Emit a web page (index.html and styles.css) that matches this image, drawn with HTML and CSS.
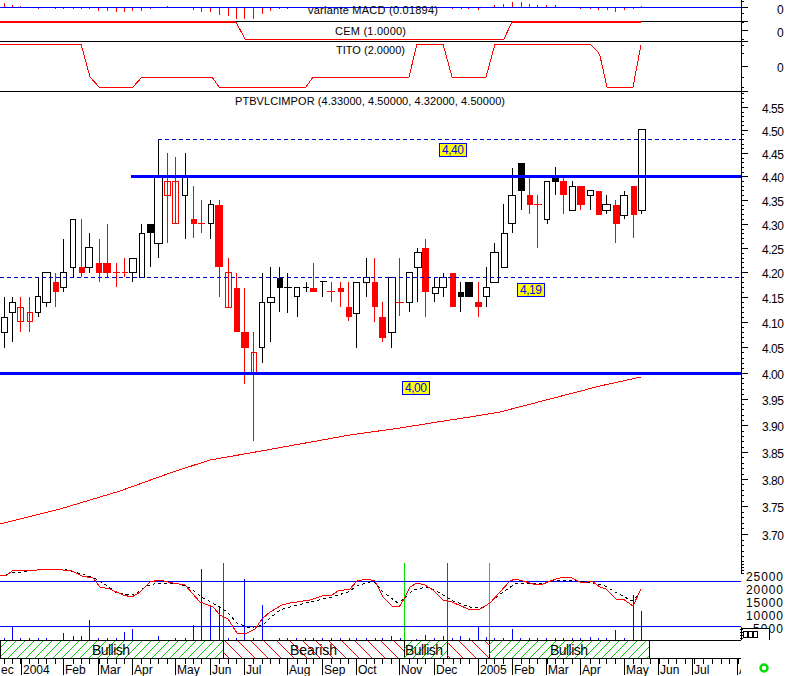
FILE: index.html
```html
<!DOCTYPE html>
<html lang="en">
<head>
    <meta charset="UTF-8">
    <title>PTBVLCIMPOR</title>
    <link rel="stylesheet" href="styles.css">
</head>
<body>

<svg id="chart" class="chart" width="788" height="676" viewBox="0 0 788 676">
    <defs>
        <pattern id="hatchGreen" width="9" height="9" patternUnits="userSpaceOnUse">
            <path class="hatch-green" d="M-1 10L10 -1M-1 1L1 -1M8 10L10 8"/>
        </pattern>
        <pattern id="hatchRed" width="13" height="13" patternUnits="userSpaceOnUse">
            <path class="hatch-red" d="M-1 -1L14 14M-1 12L1 14M12 -1L14 1"/>
        </pattern>
        <clipPath id="timeClip"><rect x="0" y="658" width="741" height="18"/></clipPath>
    </defs>
    <g id="panels"></g>
    <g id="volume"></g>
    <g id="candles"></g>
    <g id="lines"></g>
    <g id="band"></g>
    <g id="axis"></g>
    <g id="labels"></g>
</svg>

<script src="script.js"></script>

</body>
</html>
```

FILE: styles.css
```css
body {
    margin: 0;
    padding: 0;
    background-color: white;
}
.chart {
    display: block;
    font-family: "Liberation Sans", Arial, sans-serif;
    font-size: 11px;
    fill: black;
}
.chart line, .chart rect, .chart polyline {
    shape-rendering: crispEdges;
}
.black { stroke: black; stroke-width: 1; fill: none; }
.blue { stroke: #0000ff; stroke-width: 1; fill: none; }
.red { stroke: #ff0000; stroke-width: 1; fill: none; }
.green { stroke: #00e000; stroke-width: 1; fill: none; }
.thick { stroke-width: 3; }
.thick-red { stroke-width: 2; }
.dashed { stroke: #0000cc; stroke-width: 1; stroke-dasharray: 4 3; }
.dotted { stroke: black; stroke-width: 1; stroke-dasharray: 3 3; fill: none; }
.fill-red { fill: #ff0000; stroke: none; }
.fill-black { fill: black; stroke: none; }
.outline-black { fill: white; stroke: black; stroke-width: 1; }
.outline-red { fill: none; stroke: #ff0000; stroke-width: 1; }
.hatch-green { stroke: #00d000; stroke-width: 1; fill: none; shape-rendering: crispEdges; }
.hatch-red { stroke: #ff0000; stroke-width: 1; fill: none; shape-rendering: crispEdges; }
.tag { fill: #ffff00; stroke: #0000ff; stroke-width: 1; }
.tag-text { fill: #0000ff; font-size: 12px; }
.band-text { font-size: 14px; }
.scale-text { font-size: 12px; }
.ring { fill: none; stroke: #00e000; stroke-width: 2.5; }
.white-box { fill: white; stroke: none; }
```

FILE: script.js
```js
const NS = "http://www.w3.org/2000/svg";
const AXIS_X = 741;

function add(group, tag, attrs, text) {
    const el = document.createElementNS(NS, tag);
    for (const key in attrs) {
        el.setAttribute(key, attrs[key]);
    }
    if (text !== undefined) {
        el.textContent = text;
    }
    document.getElementById(group).appendChild(el);
    return el;
}

function hline(group, cls, x1, x2, y) {
    add(group, "line", { class: cls, x1: x1, x2: x2, y1: y + 0.5, y2: y + 0.5 });
}

function vline(group, cls, x, y1, y2) {
    add(group, "line", { class: cls, x1: x + 0.5, x2: x + 0.5, y1: y1, y2: y2 });
}

function poly(group, cls, points) {
    add(group, "polyline", { class: cls, points: points.map(p => p.join(",")).join(" ") });
}

// type, wick x, body left, body right, high, low, body top, body bottom
const candles = [
    ["w",4,1,7,297,348,317,332], ["w",12,9,15,297,342,302,312], ["o",20,17,23,297,332,307,321],
    ["o",29,27,32,297,332,312,321], ["w",38,35,40,277,317,296,312], ["w",46,42,50,272,307,272,302],
    ["r",55,53,59,273,307,282,292], ["w",63,60,66,239,292,272,287], ["w",73,70,75,219,277,219,267],
    ["r",81,79,85,219,277,267,273], ["w",89,85,92,233,273,247,267], ["r",99,96,102,239,282,263,273],
    ["r",107,103,111,224,277,263,273], ["d",116,113,120,263,287,272,272], ["d",124,122,128,258,277,272,272],
    ["w",132,129,136,258,282,258,272], ["w",141,139,144,224,277,233,277], ["k",150,147,154,224,267,224,233],
    ["w",158,154,162,139,258,177,243], ["o",167,164,170,153,243,181,195], ["o",175,172,178,157,223,181,223],
    ["w",185,182,187,153,239,177,195], ["r",193,191,197,186,238,219,224], ["d",201,198,205,200,233,223,223],
    ["w",210,208,213,200,239,204,223], ["r",219,215,223,200,297,205,267], ["o",228,225,231,258,307,272,307],
    ["r",236,234,240,273,332,288,332], ["r",244,241,249,288,384,332,348], ["o",253,251,256,332,441,352,373],
    ["w",262,259,264,273,363,302,347], ["w",270,267,274,267,342,297,302], ["k",279,277,283,267,312,278,288],
    ["b",287,284,292,273,313,287,287], ["w",297,294,299,287,317,287,296], ["b",306,303,309,282,292,287,287],
    ["r",313,310,317,263,292,288,292], ["b",322,320,327,281,297,281,281], ["d",331,327,335,282,302,291,291],
    ["r",340,338,344,282,307,288,292], ["r",348,346,352,282,321,307,317], ["w",356,353,359,282,348,282,313],
    ["w",366,363,369,258,297,277,282], ["r",374,372,378,258,322,282,307], ["r",382,379,386,302,342,317,338],
    ["w",391,388,395,277,348,277,332], ["d",399,396,404,258,316,302,302], ["w",409,406,412,272,312,272,302],
    ["w",417,414,421,248,302,252,267], ["r",425,422,429,239,317,248,292], ["w",434,432,438,278,302,287,293],
    ["w",443,439,446,273,297,277,287], ["r",453,450,456,273,307,273,307], ["k",460,458,464,282,312,292,297],
    ["k",469,465,473,282,297,282,297], ["r",478,475,482,282,317,302,307], ["w",486,483,489,267,307,287,296],
    ["w",494,490,498,243,282,252,282], ["w",503,501,507,204,267,233,267], ["w",512,508,515,168,233,195,223],
    ["k",521,518,525,163,210,163,191], ["r",529,527,533,177,214,195,205], ["d",537,534,542,195,248,204,204],
    ["w",547,544,549,181,224,181,219], ["k",555,552,559,167,195,178,182], ["r",563,560,567,176,214,181,195],
    ["w",572,569,575,181,210,186,210], ["r",580,577,585,186,210,186,205], ["w",590,587,593,190,210,190,195],
    ["r",599,596,602,191,215,191,215], ["w",606,602,610,195,214,204,210], ["r",615,613,620,200,243,205,224],
    ["w",624,620,627,191,219,195,215], ["r",633,631,637,186,238,186,215], ["w",641,638,645,129,214,129,210]
];

candles.forEach(c => {
    const [type, x, l, r, hi, lo, top, bot] = c;
    const dark = type === "w" || type === "k" || type === "b";
    const cls = dark ? "black" : "red";
    vline("candles", cls, x, hi, lo);
    if (type === "d" || type === "b") {
        hline("candles", cls, l, r, top);
    } else if (type === "r") {
        add("candles", "rect", { class: "fill-red", x: l, y: top, width: r - l, height: bot - top });
    } else if (type === "k") {
        add("candles", "rect", { class: "fill-black", x: l, y: top, width: r - l, height: bot - top });
    } else {
        add("candles", "rect", {
            class: type === "w" ? "outline-black" : "outline-red",
            x: l + 0.5, y: top + 0.5, width: r - l, height: bot - top
        });
    }
});

// moving average
poly("lines", "red", [[0,524],[60,509],[120,491],[170,473],[210,460],[250,453],[300,444],[350,435],
    [400,428],[450,420],[470,417],[500,412],[550,399],[600,386],[641,377]]);

// support and resistance
hline("lines", "blue thick", 131, AXIS_X, 176);
hline("lines", "blue thick", 0, AXIS_X, 373);
hline("lines", "dashed", 158, AXIS_X, 139);
hline("lines", "dashed", 0, AXIS_X, 277);

// top panels
hline("panels", "black", 0, AXIS_X, 21);
hline("panels", "black", 0, AXIS_X, 41);
hline("panels", "black", 0, AXIS_X, 91);

const macd = [[4,3],[12,5],[20,6],[38,9],[55,9],[63,9],[73,9],[81,9],[89,9],[98,11],[107,11],[116,12],
    [124,12],[132,11],[141,11],[150,9],[167,6],[193,10],[201,12],[210,12],[219,15],[228,16],[236,19],
    [244,19],[253,19],[262,14],[270,11],[279,9],[287,9],[452,9],[461,9],[468,9],[478,10],[494,5],
    [503,4],[512,2],[521,2],[529,4],[537,5],[546,5],[555,5],[563,8],[580,9],[590,9],[598,10],[607,10],
    [615,12],[624,10],[633,9],[641,6]];
macd.forEach(b => vline("panels", "red", b[0], Math.min(7, b[1]), Math.max(7, b[1])));
hline("panels", "blue", 0, AXIS_X, 7);

poly("panels", "red", [[0,22],[236,22],[245,39],[504,39],[512,22],[641,22]]);
hline("panels", "red thick-red", 0, 236, 21);
hline("panels", "red thick-red", 512, 641, 21);
poly("panels", "red", [[0,44],[81,44],[90,77],[99,87],[133,87],[142,77],[212,77],[219,87],[306,87],
    [313,77],[409,77],[417,44],[443,44],[452,77],[486,77],[495,44],[590,44],[598,52],[600,56],[607,87],[633,87],[641,45]]);

// volume bars
const small = [4,20,29,38,46,98,107,116,175,185,228,236,253,279,287,296,305,313,322,331,340,349,356,366,
    375,382,400,434,452,469,494,503,520,529,537,546,555,563,572,580,598,606,624];
small.forEach(x => vline("volume", "blue", x, 638, 640));
[[12,627],[63,633],[73,636],[81,636],[89,620],[124,632],[132,629],[158,636],[193,625],[201,569],[210,607],
 [219,606],[244,579],[262,605],[391,636],[416,639],[425,635],[443,636],[460,636],[478,626],[486,637],
 [512,629],[590,637],[615,630],[633,595],[641,611]].forEach(b => vline("volume", "blue", b[0], b[1], 640));
vline("volume", "red", 223, 563, 640);
vline("volume", "green", 404, 563, 640);
vline("volume", "red", 447, 563, 640);
vline("volume", "green", 489, 563, 640);
hline("volume", "blue", 0, AXIS_X, 581);
hline("volume", "blue", 0, AXIS_X, 626);

add("volume", "polyline", { class: "dotted", points: [[0,576],[12,573],[23,572],[37,570],[63,569],[78,573],
    [92,577],[103,583],[117,593],[133,595],[147,586],[157,583],[180,584],[190,588],[203,598],[220,607],
    [227,612],[237,623],[250,628],[263,625],[270,618],[280,610],[290,607],[310,602],[332,597],[348,592],
    [357,586],[373,581],[383,592],[398,603],[404,599],[413,590],[427,587],[440,593],[453,601],[470,607],
    [483,608],[493,600],[503,592],[515,584],[530,583],[543,583],[557,580],[573,580],[593,583],[605,586],
    [617,593],[632,601],[638,595]].join(" ") });
poly("volume", "red", [[0,576],[7,575],[12,571],[23,570],[37,570],[50,569],[63,570],[72,571],[82,576],
    [93,578],[100,587],[110,589],[123,595],[132,597],[140,592],[150,582],[159,580],[173,583],[185,585],
    [200,602],[213,607],[220,615],[228,619],[237,633],[247,633],[255,629],[262,619],[270,612],[282,605],
    [290,603],[310,600],[322,596],[332,595],[338,591],[350,589],[357,581],[367,579],[375,581],[383,597],
    [392,606],[399,607],[404,599],[410,587],[417,583],[425,585],[433,590],[443,600],[452,602],[468,609],
    [480,609],[490,603],[500,592],[510,581],[515,579],[523,581],[530,583],[537,585],[543,584],[553,580],
    [563,577],[572,578],[582,583],[592,581],[600,587],[606,589],[616,599],[623,599],[633,606],[641,589]]);

// signal band
const segments = [[0,223,"hatchGreen"],[223,404,"hatchRed"],[404,447,"hatchGreen"],[447,489,"hatchRed"],[489,649,"hatchGreen"]];
segments.forEach(s => {
    add("band", "rect", { x: s[0], y: 640, width: s[1] - s[0], height: 18, fill: "url(#" + s[2] + ")" });
    vline("band", "black", s[1], 640, 658);
});
vline("band", "black", 0, 640, 658);
hline("band", "black", 0, AXIS_X, 640);
hline("band", "black", 0, AXIS_X, 658);
[[92,"Bullish"],[290,"Bearish"],[405,"Bullish"],[550,"Bullish"]].forEach(t => {
    add("band", "text", { class: "band-text", x: t[0], y: 655, textLength: t[1] === "Bearish" ? 47 : 38 }, t[1]);
});

// time axis
candles.forEach(c => vline("band", "black", c[1], 658, 664));
for (let x = 650; x < AXIS_X; x += 8.83) {
    vline("band", "black", Math.round(x), 658, 664);
}
const months = [[21,"2004"],[63,"Feb"],[98,"Mar"],[132,"Apr"],[175,"May"],[210,"Jun"],[244,"Jul"],[287,"Aug"],
    [322,"Sep"],[356,"Oct"],[399,"Nov"],[434,"Dec"],[478,"2005"],[512,"Feb"],[546,"Mar"],[580,"Apr"],
    [624,"May"],[658,"Jun"],[692,"Jul"],[737,"A"]];
months.forEach(m => {
    vline("band", "black", m[0], 658, 675);
    add("band", "text", { class: "scale-text", x: m[0] + 2, y: 674, "clip-path": "url(#timeClip)" }, m[1]);
});
add("band", "text", { class: "scale-text", x: 1, y: 674 }, "ec");

// right axis
vline("axis", "black", AXIS_X, 0, 573);
vline("axis", "black", AXIS_X, 627, 640);

[1,13,22,39,45,53,77,87].forEach(y => hline("axis", "black", AXIS_X, AXIS_X + 3, y));
[[7,10],[21,0],[30,33],[41,0],[66,68],[91,0]].forEach(m => {
    hline("axis", "black", AXIS_X, AXIS_X + 7, m[0]);
    if (m[1]) {
        add("axis", "text", { class: "scale-text", x: 777, y: m[1] + 4 }, "0");
    }
});

function priceY(p) {
    return Math.round(107 + 2065 * Math.log(4.55 / p));
}
for (let i = 366; i <= 458; i++) {
    const y = priceY(i / 100);
    const major = i % 5 === 0;
    hline("axis", "black", AXIS_X, AXIS_X + (major ? 7 : 3), y);
    if (major && i >= 370 && i <= 455) {
        add("axis", "text", { class: "scale-text", x: 762, y: y + 6, textLength: 22 }, (i / 100).toFixed(2));
    }
}

for (let y = 573; y >= 561; y -= 3) {
    hline("axis", "black", AXIS_X, AXIS_X + 3, y);
}
[[25000,577],[20000,590],[15000,603],[10000,616],[5000,629]].forEach(v => {
    const wide = v[0] > 9999;
    add("axis", "text", { class: "scale-text", x: wide ? 746 : 753, y: v[1] + 4, textLength: wide ? 37 : 30 }, v[0]);
});
add("axis", "rect", { class: "white-box", x: 742, y: 628, width: 27, height: 14 });
hline("axis", "black", AXIS_X, 769, 628);
vline("axis", "black", 769, 628, 640);
for (let y = 629; y < 640; y += 3) {
    hline("axis", "black", AXIS_X - 1, AXIS_X + 2, y);
}
[743,748,753].forEach(x => add("axis", "rect", { class: "outline-black", x: x + 0.5, y: 631.5, width: 4, height: 6 }));
add("axis", "circle", { class: "ring", cx: 764, cy: 668, r: 3.5 });

// titles and price tags
[["variante MACD (0.01894)",308,14,130],["CEM (1.0000)",335,35,71],["TITO (2.0000)",336,54,69],
 ["PTBVLCIMPOR (4.33000, 4.50000, 4.32000, 4.50000)",235,105,270]].forEach(t => {
    add("labels", "text", { x: t[1], y: t[2], textLength: t[3] }, t[0]);
});
[["4,40",439,143],["4,19",517,283],["4,00",402,381]].forEach(t => {
    add("labels", "rect", { class: "tag", x: t[1] + 0.5, y: t[2] + 0.5, width: 27, height: 13 });
    add("labels", "text", { class: "tag-text", x: t[1] + 3, y: t[2] + 11, textLength: 22 }, t[0]);
});
```
